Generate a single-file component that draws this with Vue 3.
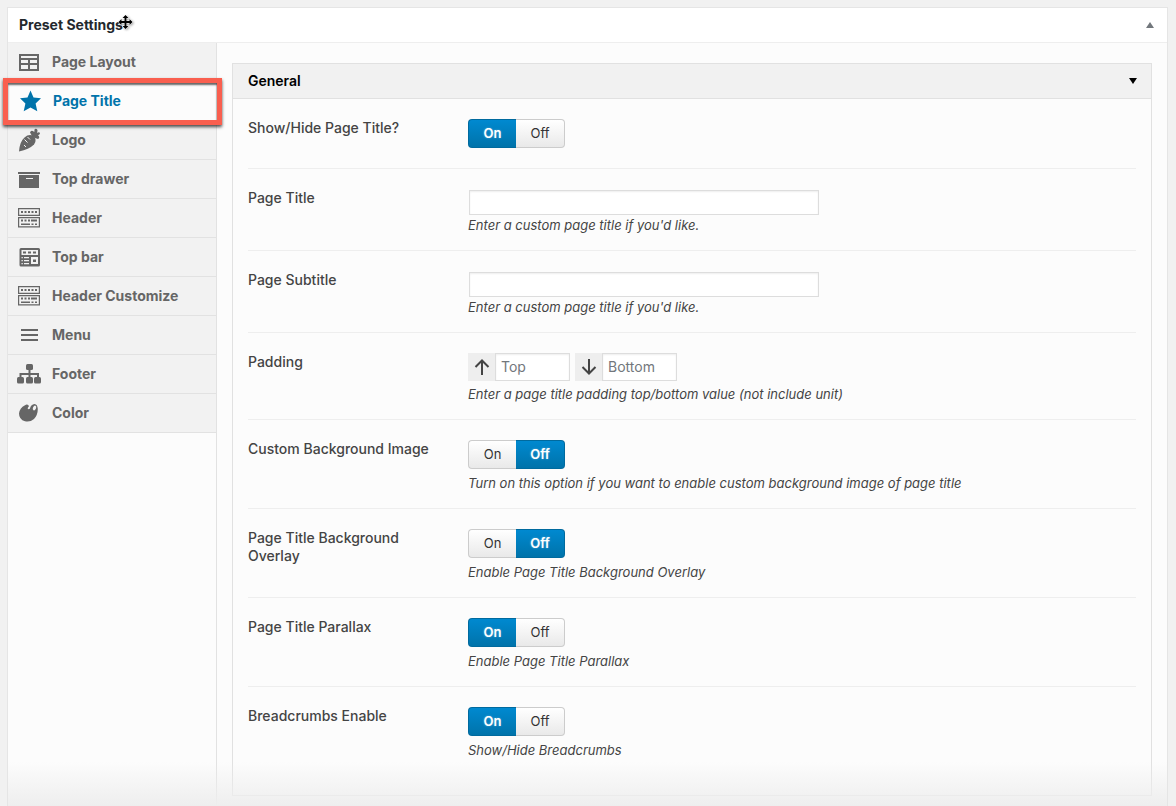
<script setup>
import { reactive, ref } from 'vue'

const tabs = ['Page Layout', 'Page Title', 'Logo', 'Top drawer', 'Header', 'Top bar', 'Header Customize', 'Menu', 'Footer', 'Color']
const icons = ['table', 'star', 'carrot', 'drawer', 'rows', 'bar', 'rows', 'menu', 'sitemap', 'palette']
const active = ref(1)

const fields = reactive([
  { id: 'show-title', label: 'Show/Hide Page Title?', type: 'switch', value: 'On' },
  { id: 'title', label: 'Page Title', type: 'text', value: '', help: "Enter a custom page title if you'd like." },
  { id: 'subtitle', label: 'Page Subtitle', type: 'text', value: '', help: "Enter a custom page title if you'd like." },
  { id: 'padding', label: 'Padding', type: 'spacing', top: '', bottom: '', help: 'Enter a page title padding top/bottom value (not include unit)' },
  { id: 'custom-bg', label: 'Custom Background Image', type: 'switch', value: 'Off', help: 'Turn on this option if you want to enable custom background image of page title' },
  { id: 'overlay', label: 'Page Title Background Overlay', type: 'switch', value: 'Off', help: 'Enable Page Title Background Overlay' },
  { id: 'parallax', label: 'Page Title Parallax', type: 'switch', value: 'On', help: 'Enable Page Title Parallax' },
  { id: 'breadcrumbs', label: 'Breadcrumbs Enable', type: 'switch', value: 'On', help: 'Show/Hide Breadcrumbs' },
])
</script>

<template>
  <div class="page">
    <section class="panel">
      <header class="panel-head">
        <h2>
          Preset Settings
          <svg class="cursor" viewBox="0 0 16 16" aria-hidden="true">
            <path d="M7.500 1 10.500 4H8.500v3h3V5L14.500 8l-3 3V9h-3v3h2l-3 3-3-3h2V9h-3v2l-3-3 3-3v2h3V4h-2z" />
          </svg>
        </h2>
        <button class="toggle up" aria-label="Collapse panel"></button>
      </header>
      <div class="panel-body">
        <nav class="tabs" aria-label="Preset sections">
          <a v-for="(tab, i) in tabs" :key="tab" href="#" class="tab" :class="{ active: i === active }" @click.prevent="active = i">
            <svg class="icon" viewBox="0 0 24 24" aria-hidden="true">
              <path v-if="icons[i] === 'table'" fill-rule="evenodd" d="M2 4h20v17H2zM4 6v2h16V6zM4 10v3h7v-3zM13 10v3h7v-3zM4 15v4h7v-4zM13 15v4h7v-4z" />
              <path v-else-if="icons[i] === 'star'" d="M12.500 1.500 15.500 8.500 23 9.300 17.600 14.400 19.300 22.300 12.500 18.400 5.700 22.300 7.400 14.400 2 9.300 9.500 8.500z" />
              <g v-else-if="icons[i] === 'carrot'">
                <path d="M2 23.500Q2.500 14 7.500 9.500Q12 5.500 16.500 8Q20.500 12 17 16.500Q12 21.500 2 23.500z" />
                <path d="M15.500 9 13 4.500Q14 1.500 17.300 4L17.500 1.500Q19 0 20.500 2L20.200 5Q22 3.500 23 5Q23.300 6.500 21 7.200Q23.500 9.500 21 11L16.500 9.500z" />
                <path class="cut" d="M7.500 11.500l3 3M10.500 9l2.500 2.500M7 17l2 2" />
              </g>
              <path v-else-if="icons[i] === 'drawer'" fill-rule="evenodd" d="M1 5h22v2H1zM2 8h20v13H2zM9 11v1h7v-1z" />
              <path v-else-if="icons[i] === 'rows'" fill-rule="evenodd" d="M1 2h22v8H1zM2.200 3.200v5.600h19.600V3.200zM1 11h22v10.500H1zM2.200 12.200v8.100h19.600v-8.100zM4 5h2v2H4zM7.500 5h2v2h-2zM11 5h2v2h-2zM14.500 5h2v2h-2zM18 5h2v2h-2zM4 13.500h2v2H4zM7.500 13.500h2v2h-2zM11 13.500h2v2h-2zM14 13.500h6v2h-6zM4 17.500h9v1.500H4zM14.500 17.500h2v1.500h-2zM18 17.500h2v1.500h-2z" />
              <path v-else-if="icons[i] === 'bar'" fill-rule="evenodd" d="M4 3h17.500q1.500 0 1.500 1.500V20q0 1.500-1.500 1.500H4q-1.500 0-1.500-1.500V4.500Q2.500 3 4 3zM4.500 5v5h16.500V5zM6 6.500h3v2H6zM11 6.500h3v2h-3zM16 6.500h3v2h-3zM4.500 12v1.200h1.300V12zM7 12v1.200h5V12zM4.500 15v1.200h1.300V15zM7 15v1.200h5V15zM4.500 18v1.200h1.300V18zM7 18v1.200h5V18zM14 12v7h7v-7zM16 14.500h3V17h-3z" />
              <path v-else-if="icons[i] === 'menu'" d="M4 6h17v2H4zM4 11h17v2H4zM4 16h17v2H4z" />
              <g v-else-if="icons[i] === 'sitemap'">
                <rect x="9" y="2" width="7" height="6" rx="1.500" /><rect x="0" y="15" width="7" height="6.500" rx="1.500" />
                <rect x="9" y="15" width="7" height="6.500" rx="1.500" /><rect x="17" y="15" width="7" height="6.500" rx="1.500" />
                <path class="line" d="M12.500 7v9M3.500 16v-4H21V16" />
              </g>
              <g v-else>
                <path d="M8 4.200Q10 3 11.500 4.200Q12.500 5.500 11 6.500Q10 7.500 11.500 8.300Q13 8.500 13.300 6.500Q14 3.500 17.500 3Q20.500 3.200 20.800 8Q20.800 14 17 18Q13 21.500 8 20.300Q2 18.500 2 12.500Q2.500 7 8 4.200z" />
                <ellipse class="hole" cx="17.500" cy="7" rx="1.500" ry="2.500" transform="rotate(25 17.500 7)" />
              </g>
            </svg>
            <span>{{ tab }}</span>
          </a>
        </nav>
        <main class="content">
          <section class="card">
            <header class="card-head">
              <h3>General</h3>
              <button class="toggle down" aria-label="Toggle General"></button>
            </header>
            <div class="rows">
              <div v-for="f in fields" :key="f.id" class="row">
                <component :is="f.type === 'text' ? 'label' : 'div'" :id="f.id + '-label'" :for="f.type === 'text' ? f.id : null" class="label">{{ f.label }}</component>
                <div class="control">
                  <div v-if="f.type === 'switch'" class="switch" role="radiogroup" :aria-labelledby="f.id + '-label'">
                    <label v-for="o in ['On', 'Off']" :key="o" :class="{ on: f.value === o }">
                      <input v-model="f.value" type="radio" :name="f.id" :value="o" />{{ o }}
                    </label>
                  </div>
                  <input v-else-if="f.type === 'text'" :id="f.id" v-model="f.value" class="text" type="text" />
                  <div v-else class="spacing">
                    <label class="addon">
                      <svg viewBox="0 0 27 28" role="img" aria-label="Top"><path d="M14 22V7.500M7.500 14l6.500-6.500 6.500 6.500" /></svg>
                      <input v-model="f.top" type="text" placeholder="Top" />
                    </label>
                    <label class="addon">
                      <svg viewBox="0 0 27 28" role="img" aria-label="Bottom"><path d="M14 6v14.500M7.500 14l6.500 6.500 6.500-6.500" /></svg>
                      <input v-model="f.bottom" type="text" placeholder="Bottom" />
                    </label>
                  </div>
                  <p v-if="f.help" class="help">{{ f.help }}</p>
                </div>
              </div>
            </div>
          </section>
        </main>
      </div>
    </section>
  </div>
</template>

<style>
body {
  background: #f1f1f1;
}
</style>

<style scoped>
* {
  box-sizing: border-box;
}
.page {
  height: 100vh;
  overflow: hidden;
  padding: 7px 8px 0 7px;
  font: 13px/18px Inter, "Liberation Sans", sans-serif;
  color: #444;
}
.panel {
  position: relative;
  background: #fcfcfc;
  border: 1px solid #e5e5e5;
  border-bottom: 0;
  min-height: 100%;
  display: flex;
  flex-direction: column;
}
.panel::after {
  content: "";
  position: absolute;
  inset: auto 0 0;
  height: 44px;
  background: linear-gradient(rgba(238, 238, 238, 0), #eeeeee);
  pointer-events: none;
}
.panel-head {
  display: flex;
  align-items: center;
  justify-content: space-between;
  height: 35px;
  padding: 0 13px 0 11px;
  background: #fff;
  border-bottom: 1px solid #eee;
}
h2,
h3 {
  margin: 0;
  font-size: 14px;
  line-height: 18px;
  font-weight: 600;
}
h2 {
  position: relative;
  font-weight: 700;
  color: #23282d;
}
h3 {
  color: #000;
}
.cursor {
  position: absolute;
  left: 99px;
  top: -2px;
  width: 16px;
  height: 16px;
  fill: #000;
  stroke: #fff;
  stroke-width: 1;
  paint-order: stroke;
  filter: drop-shadow(1px 1px 1px rgba(0, 0, 0, 0.35));
}
.toggle {
  width: 8px;
  height: 6px;
  padding: 0;
  border: 0;
}
.up {
  background: #72777c;
  clip-path: polygon(50% 0, 100% 100%, 0 100%);
}
.down {
  background: #000;
  clip-path: polygon(0 0, 100% 0, 50% 100%);
}
.panel-body {
  flex: 1;
  display: flex;
}
.tabs {
  flex: none;
  width: 209px;
  border-right: 1px solid #e2e2e2;
}
.tab {
  position: relative;
  display: flex;
  align-items: center;
  gap: 11px;
  height: 39px;
  padding-left: 9px;
  background: #f2f2f2;
  border-bottom: 1px solid #e2e2e2;
  color: #666;
  font-size: 14px;
  font-weight: 700;
  text-decoration: none;
}
.active {
  z-index: 1;
  padding-left: 10px;
  background: #fcfcfc;
  color: #0073aa;
}
.active::after {
  content: "";
  position: absolute;
  inset: -4px -6px -5px -5px;
  border: 5px solid #f95f4f;
  box-shadow: 0 2px 3px rgba(0, 0, 0, 0.7), inset 0 2px 2px rgba(0, 0, 0, 0.6);
}
.icon {
  flex: none;
  width: 24px;
  height: 24px;
  fill: currentColor;
}
.cut {
  fill: none;
  stroke: #f2f2f2;
  stroke-width: 1;
}
.hole {
  fill: #f2f2f2;
}
.line {
  fill: none;
  stroke: currentColor;
  stroke-width: 2;
}
.content {
  flex: 1;
  padding: 20px 15px 0;
}
.card {
  border: 1px solid #e1e1e1;
  padding-bottom: 20px;
}
.card-head {
  display: flex;
  align-items: center;
  justify-content: space-between;
  height: 35px;
  padding: 0 14px 0 15px;
  background: #f1f1f1;
  border-bottom: 1px solid #e1e1e1;
}
.rows {
  padding: 0 15px;
}
.row {
  display: flex;
  min-height: 70px;
  padding: 20px 0 16px;
  border-bottom: 1px solid #eee;
}
.row:last-child {
  border-bottom: 0;
}
.label {
  flex: none;
  width: 200px;
  margin-right: 20px;
  font-size: 14px;
  font-weight: 500;
}
.control {
  flex: 1;
}
.help {
  margin: 5px 0 0;
  font-style: italic;
}
.switch {
  display: flex;
  width: 97px;
  height: 29px;
}
.switch label {
  width: 48px;
  text-align: center;
  line-height: 27px;
  color: #333;
  border: 1px solid #ccc;
  background: linear-gradient(#fff, #e9e9e9);
}
.switch label:first-child {
  border-radius: 4px 0 0 4px;
  border-right: 0;
}
.switch label:last-child {
  width: 49px;
  border-radius: 0 4px 4px 0;
  border-left: 0;
}
.switch .on {
  color: #fff;
  font-weight: 600;
  border-color: #006a9e;
  background: linear-gradient(#0089d0, #0073aa);
  text-shadow: 0 0 2px rgba(255, 255, 255, 0.4);
}
.switch input {
  position: absolute;
  opacity: 0;
  pointer-events: none;
}
.text,
.addon input {
  border: 1px solid #ddd;
  background: #fff;
  box-shadow: inset 0 1px 2px rgba(0, 0, 0, 0.07);
  font: inherit;
  font-size: 14px;
  color: #32373c;
  border-radius: 0;
}
.text {
  display: block;
  width: 350px;
  max-width: 100%;
  height: 25px;
  margin: 1px;
}
.text + .help {
  margin-top: 1px;
}
.spacing {
  display: flex;
  gap: 5px;
}
.spacing + .help {
  margin-top: 4px;
}
.addon {
  display: flex;
  height: 28px;
  background: #eee;
}
.addon svg {
  width: 27px;
  height: 28px;
  fill: none;
  stroke: #444;
  stroke-width: 2;
}
.addon input {
  width: 75px;
  padding: 2px 5px;
}
.addon input::placeholder {
  color: #72777c;
}
</style>
